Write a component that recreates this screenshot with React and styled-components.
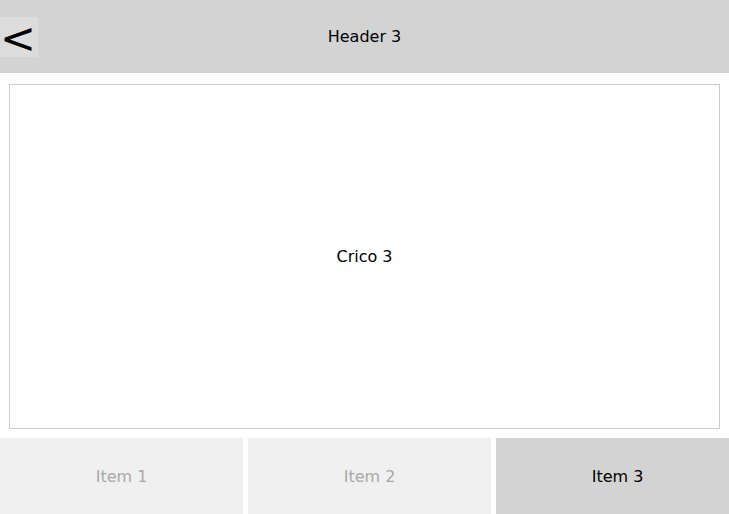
import React from 'react'
import styled, { createGlobalStyle } from 'styled-components'

const GlobalStyle = createGlobalStyle`
  html, body {
    margin: 0;
    padding: 0;
    background: #fff;
    font-family: "DejaVu Sans", sans-serif;
    font-size: 16px;
  }
  * {
    box-sizing: border-box;
  }
`

const Page = styled.div`
  display: flex;
  flex-direction: column;
  width: 729px;
  height: 514px;
  overflow: hidden;
`

const Header = styled.div`
  position: relative;
  flex: 0 0 73px;
  display: flex;
  align-items: center;
  justify-content: center;
  background-color: #d3d3d3;
  color: #000;
`

const BackButton = styled.button`
  position: absolute;
  left: 0;
  top: 17px;
  width: 38px;
  height: 40px;
  padding: 0;
  border: none;
  background-color: #dcdcdc;
  font-family: "DejaVu Sans", sans-serif;
  font-size: 43px;
  line-height: 42px;
  text-align: left;
  color: #000;
`

const Main = styled.div`
  flex: 0 0 345px;
  margin: 11px 9px 9px 9px;
  border: 1px solid #cccccc;
  display: flex;
  align-items: center;
  justify-content: center;
  color: #000;
`

const Footer = styled.div`
  flex: 1;
  display: grid;
  grid-template-columns: 243px 243px 243px;
  column-gap: 5px;
`

const Tab = styled.div`
  display: flex;
  align-items: center;
  justify-content: center;
  background-color: ${p => (p.active ? '#d3d3d3' : '#f0f0f0')};
  color: ${p => (p.active ? '#000' : '#a9a9a9')};
`

const items = ['Item 1', 'Item 2', 'Item 3']

export default function App() {
  const current = 2
  return (
    <Page>
      <GlobalStyle />
      <Header>
        <BackButton>&lt;</BackButton>
        Header 3
      </Header>
      <Main>Crico 3</Main>
      <Footer>
        {items.map((item, i) => (
          <Tab key={item} active={i === current}>{item}</Tab>
        ))}
      </Footer>
    </Page>
  )
}
